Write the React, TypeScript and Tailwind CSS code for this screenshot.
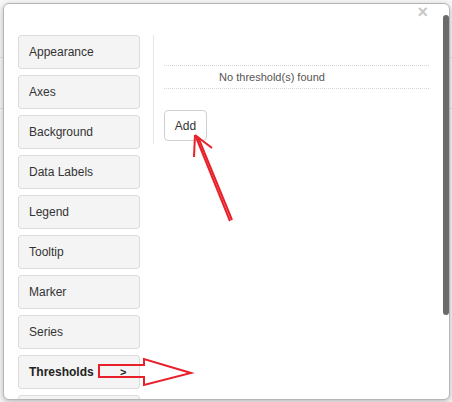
import React from "react";

const TABS = [
  "Appearance",
  "Axes",
  "Background",
  "Data Labels",
  "Legend",
  "Tooltip",
  "Marker",
  "Series",
  "Thresholds",
  "",
];

export default function App() {
  return (
    <div
      className="relative w-[452px] h-[402px] overflow-hidden bg-[#f7f7f7]"
      style={{ fontFamily: '"Liberation Sans", Arial, sans-serif' }}
    >
      {/* faint chart lines behind the modal */}
      <div className="absolute left-0 top-[57px] w-full h-px bg-[#e2e2e2]" />
      <div className="absolute left-0 top-[108px] w-full h-px bg-[#e2e2e2]" />

      <div className="absolute left-[3px] top-[3px] w-[447px] h-[397px] rounded-[6px] border border-[#b5b5b5] bg-white shadow-[0_2px_6px_rgba(0,0,0,0.25)] overflow-hidden">
        <button className="absolute right-[21px] top-[-1px] text-[18px] leading-[18px] font-bold text-[#c8c8c8]">
          ×
        </button>

        <div className="flex pl-[14px] pt-[31px] pr-[20px]">
          <div className="flex flex-col gap-[6px] w-[122px] shrink-0">
            {TABS.map((t, i) => (
              <div
                key={i}
                className="relative h-[34px] shrink-0 flex items-center pl-[10px] rounded-[3px] border border-[#dcdcdc] bg-[#f4f4f4] text-[12px] text-[#333]"
              >
                <span className={t === "Thresholds" ? "font-bold text-[#222]" : ""}>{t}</span>
                {t === "Thresholds" && (
                  <span className="absolute left-[101px] font-bold text-[11px] text-[#222]">&gt;</span>
                )}
              </div>
            ))}
          </div>

          <div className="ml-[13px] self-start h-[109px] border-l border-[#e6e6e6] pl-[10px] flex-1">
            <div className="h-[30px]" />
            <div className="h-[24px] border-y border-dotted border-[#d6d6d6] flex items-center justify-center pr-[49px] text-[11px] text-[#555]">
              No threshold(s) found
            </div>
            <button className="mt-[21px] w-[43px] h-[31px] rounded-[4px] border border-[#cfcfcf] bg-white text-[12px] text-[#333]">
              Add
            </button>
          </div>
        </div>

        {/* scrollbar */}
        <div className="absolute right-[0px] top-[11px] w-[6px] h-[300px] rounded-[3px] bg-[#6b6b6b]" />
      </div>

      {/* red annotation arrows */}
      <svg className="absolute left-0 top-0 pointer-events-none" width="452" height="402">
        <g stroke="#e8202a" strokeWidth="2" fill="none" strokeLinejoin="miter">
          <path d="M230 221 L196 137" />
          <path d="M232 220 L198 137" />
          <path d="M195 135 L194 157" />
          <path d="M195 135 L212 148" />
          <path d="M99 365 H144 V359 L191 373 L144 385 V377 H99 Z" />
        </g>
      </svg>
    </div>
  );
}
